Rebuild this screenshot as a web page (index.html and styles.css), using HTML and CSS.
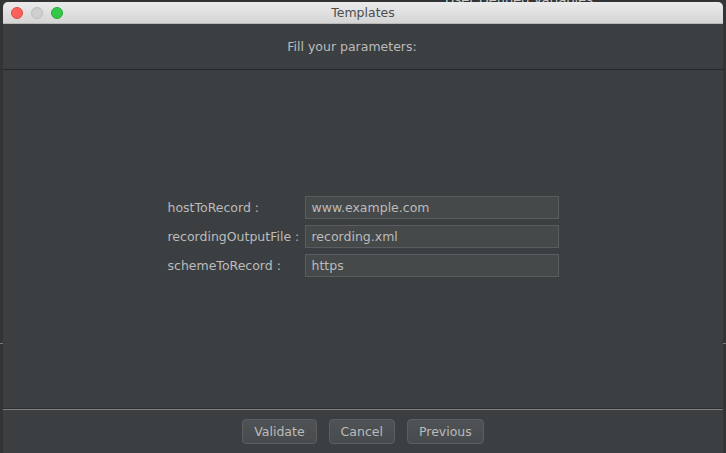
FILE: index.html
```html
<!DOCTYPE html>
<html>
<head>
<meta charset="utf-8">
<title>Templates</title>
<link rel="stylesheet" href="styles.css">
</head>
<body>
<div class="desktop">
  <div class="behind-text">User Defined Variables</div>
  <div class="behind-line behind-line-left"></div>
  <div class="behind-line behind-line-right"></div>
  <div class="window">
    <div class="titlebar">
      <div class="lights">
        <span class="light red"></span>
        <span class="light gray"></span>
        <span class="light green"></span>
      </div>
      <div class="title">Templates</div>
      <div></div>
    </div>
    <div class="header">Fill your parameters:</div>
    <div class="content">
      <div class="form">
        <div class="label">hostToRecord :</div>
        <div class="field">www.example.com</div>
        <div class="label">recordingOutputFile :</div>
        <div class="field">recording.xml</div>
        <div class="label">schemeToRecord :</div>
        <div class="field">https</div>
      </div>
    </div>
    <div class="footer">
      <button class="btn">Validate</button>
      <button class="btn">Cancel</button>
      <button class="btn">Previous</button>
    </div>
  </div>
</div>
</body>
</html>
```
FILE: styles.css
```css
html, body {
  margin: 0;
  padding: 0;
  background: #323436;
  overflow: hidden;
}
.desktop {
  position: relative;
  width: 726px;
  height: 453px;
  padding: 2px 0 0 3px;
  box-sizing: border-box;
  font-family: "DejaVu Sans", "Liberation Sans", sans-serif;
}
.behind-text {
  position: absolute;
  left: 445px;
  top: -8px;
  font-size: 13px;
  color: #c8c8c8;
}
.behind-line {
  position: absolute;
  top: 343px;
  height: 1px;
  width: 3px;
  background: #777;
}
.behind-line-left { left: 0; }
.behind-line-right { right: 0; }
.window {
  position: relative;
  width: 720px;
  height: 451px;
  display: flex;
  flex-direction: column;
  background: #3c3f41;
}
.titlebar {
  height: 22px;
  flex: none;
  display: grid;
  grid-template-columns: 1fr auto 1fr;
  align-items: center;
  background: linear-gradient(#ebebeb, #d5d5d5);
  border-radius: 5px 5px 0 0;
  border-bottom: 1px solid #b8b8b8;
  box-sizing: border-box;
}
.lights {
  display: flex;
  gap: 8px;
  padding-left: 8px;
}
.light {
  width: 12px;
  height: 12px;
  border-radius: 50%;
  box-sizing: border-box;
}
.red { background: #fc605c; border: 1px solid #de4a45; }
.gray { background: #cfcfcf; border: 1px solid #bdbdbd; }
.green { background: #34c84a; border: 1px solid #27a83a; }
.title {
  font-size: 12.5px;
  color: #4d4d4d;
}
.header {
  height: 45px;
  flex: none;
  line-height: 45px;
  text-align: center;
  padding-right: 22px;
  font-size: 12.5px;
  color: #bbbbbb;
  border-bottom: 1px solid #262728;
}
.content {
  flex: 1;
  display: flex;
  align-items: center;
  justify-content: center;
  padding-bottom: 5px;
  border-bottom: 1px solid #2d2e2f;
  box-shadow: 0 1px 0 #808283;
  margin-bottom: 1px;
}
.form {
  display: grid;
  grid-template-columns: 131px 254px;
  grid-auto-rows: 23px;
  gap: 6px 6px;
}
.label {
  font-size: 12.5px;
  color: #bbbbbb;
  line-height: 23px;
  white-space: nowrap;
}
.field {
  background: #45494a;
  border: 1px solid #5a5d5f;
  box-sizing: border-box;
  padding: 0 6px;
  font-size: 12.5px;
  color: #bbbbbb;
  line-height: 21px;
}
.footer {
  height: 43px;
  flex: none;
  display: flex;
  justify-content: center;
  align-items: flex-start;
  padding-top: 9px;
  box-sizing: border-box;
  gap: 12px;
}
.btn {
  height: 25px;
  padding: 0 11px;
  border: 1px solid #5c5f61;
  border-radius: 4px;
  background: linear-gradient(#4f5355, #474b4d);
  color: #bbbbbb;
  font-family: "DejaVu Sans", "Liberation Sans", sans-serif;
  font-size: 12.5px;
}
```
